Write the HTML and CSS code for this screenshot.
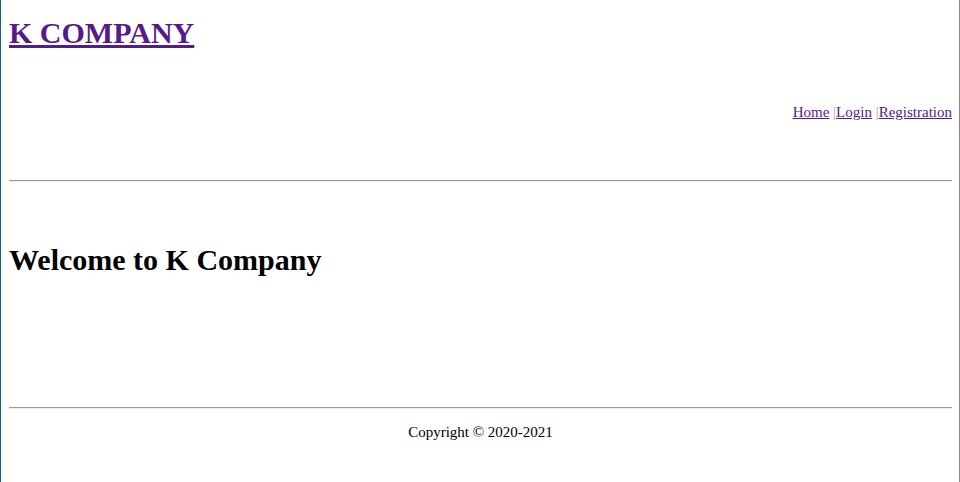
FILE: index.html
```html
<!DOCTYPE html>
<html>
<head>
<meta charset="utf-8">
<title>K Company</title>
<link rel="stylesheet" href="styles.css">
</head>
<body>
<div class="frame">
  <header class="header">
    <h1 class="brand"><a href="#">K COMPANY</a></h1>
    <nav class="nav">
      <a href="#">Home</a> <span class="sep">|</span><a href="#">Login</a> <span class="sep">|</span><a href="#">Registration</a>
    </nav>
  </header>
  <hr class="rule rule-top">
  <main class="main">
    <h1 class="welcome">Welcome to K Company</h1>
  </main>
  <hr class="rule">
  <footer class="footer">Copyright © 2020-2021</footer>
</div>
</body>
</html>
```
FILE: styles.css
```css
html, body {
  margin: 0;
  padding: 0;
  height: 100%;
  background: #fff;
}
body {
  font-family: "Liberation Serif", "Times New Roman", serif;
  color: #000;
}
.frame {
  box-sizing: border-box;
  height: 482px;
  border-left: 1px solid #13607a;
  border-right: 1px solid #8a8a8a;
  padding: 0 7px 0 8px;
  overflow: hidden;
}
a {
  color: #551a8b;
}
.header {
  display: flex;
  flex-direction: column;
}
.brand {
  margin: 16px 0 0;
  font-size: 30px;
  font-weight: bold;
  line-height: 34px;
}
.nav {
  align-self: flex-end;
  margin-top: 53px;
  font-size: 15px;
  line-height: 18px;
}
.sep {
  color: #c9a48a;
}
.rule {
  margin: 0;
  border: none;
  border-top: 1px solid #9a9a9a;
  border-bottom: 1px solid #eeeeee;
}
.rule-top {
  margin-top: 59px;
}
.main {
  box-sizing: border-box;
  height: 225px;
  padding-top: 61px;
}
.welcome {
  margin: 0;
  font-size: 30px;
  font-weight: bold;
  line-height: 34px;
}
.footer {
  text-align: center;
  font-size: 15px;
  line-height: 18px;
  margin-top: 14px;
}
```
